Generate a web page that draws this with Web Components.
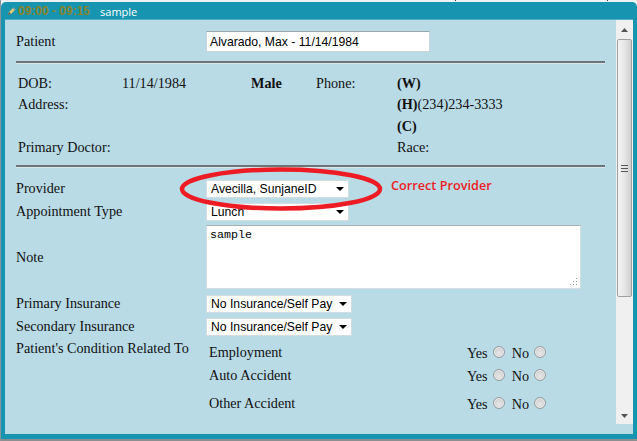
<!DOCTYPE html>
<html><head><meta charset="utf-8"><style>
html,body{margin:0;padding:0;background:#e9edf0;width:637px;height:441px;overflow:hidden}
body{background:linear-gradient(#444,#444) 455px 0/1px 1px no-repeat,linear-gradient(#444,#444) 607px 0/1px 1px no-repeat,linear-gradient(#8a949c,#8a949c) 0 0/1px 441px no-repeat,#eef1f3}
</style></head><body>
<x-window>
  <x-title slot="title" time="09:00 - 09:15" name="sample"></x-title>
  <x-patient-row label="Patient" value="Alvarado, Max - 11/14/1984"></x-patient-row>
  <x-rule gap="9"></x-rule>
  <x-info></x-info>
  <x-rule gap="7"></x-rule>
  <x-field label="Provider" h="23" top="10" lp="0" lb="0"><x-select w="143" value="Avecilla, SunjaneID"></x-select></x-field>
  <x-field label="Appointment Type" h="24" top="0" lp="0" lb="2"><x-select w="143" value="Lunch"></x-select></x-field>
  <x-field label="Note" h="66" top="0" lp="0" lb="0"><x-note value="sample"></x-note></x-field>
  <x-field label="Primary Insurance" h="23" top="2" lp="0" lb="0"><x-select w="146" value="No Insurance/Self Pay"></x-select></x-field>
  <x-field label="Secondary Insurance" h="23" top="0" lp="0" lb="0"><x-select w="146" value="No Insurance/Self Pay"></x-select></x-field>
  <x-conditions></x-conditions>
  <x-callout></x-callout>
</x-window>
<script>
function def(name, html){
  customElements.define(name, class extends HTMLElement{
    constructor(){super();this.attachShadow({mode:'open'});}
    connectedCallback(){
      const a=n=>this.getAttribute(n)||'';
      this.shadowRoot.innerHTML=typeof html==='function'?html(a):html;
    }
  });
}
def('x-window',`<style>
:host{display:flex;flex-direction:column;position:relative;box-sizing:border-box;width:636px;height:437px;margin:2px 0 0 1px;background:#1795b0;border-radius:5px 5px 0 0;padding:2px 4px 5px 4px;box-shadow:0 2px 0 #8b8f90;font:14.2px "Liberation Serif",serif;color:#111}
.body{flex:1;display:flex;min-height:0;background:#b9dbe6;box-shadow:0 -1px 0 #4fb0c8}
.content{flex:1;min-width:0;padding:11px 11px 0 11px;display:flex;flex-direction:column;position:relative}
</style><slot name="title"></slot><div class="body"><div class="content"><slot></slot></div><x-scrollbar></x-scrollbar></div>`);
def('x-title',a=>`<style>
:host{display:flex;align-items:center;height:14px;flex:none;margin-bottom:2px;overflow:hidden}
svg{margin:0 2px 0 2px;flex:none}
.t{font:bold 12px "Liberation Sans",sans-serif;color:#8b8328;margin-right:10px}
.n{font:11px "Open Sans","Liberation Sans",sans-serif;color:#fff}
</style><svg width="9" height="10" viewBox="0 0 9 10"><path d="M1 9L2 6L6.5 1.5L8.5 3.5L4 8Z" fill="#dccb78"/><path d="M6.5 1.5L8.5 3.5L7.5 4.5L5.5 2.5Z" fill="#8e9aa0"/><path d="M1 9L2 6L4 8Z" fill="#555"/></svg><span class="t">${a('time')}</span><span class="n">${a('name')}</span>`);
def('x-scrollbar',`<style>
:host{flex:none;width:17px;display:flex;flex-direction:column;background:#f0f0f0;margin-bottom:10px}
.b{height:19px;display:flex;align-items:center;justify-content:center;flex:none}
.e{height:17px}
.thumb{height:258px;flex:none;margin:0 1px 0 1px;border:1px solid #a0a0a0;border-radius:2px;background:linear-gradient(90deg,#f4f4f4,#e6e6e6 50%,#cfcfcf);display:flex;align-items:center;justify-content:center;box-sizing:border-box}
.g{width:7px;height:7px;background:repeating-linear-gradient(#555 0 1px,transparent 1px 3px)}
</style><div class="b"><svg width="7" height="4"><path d="M0 4L3.5 0L7 4Z" fill="#555"/></svg></div>
<div class="thumb"><div class="g"></div></div><div style="flex:1"></div>
<div class="b e"><svg width="7" height="4"><path d="M0 0L3.5 4L7 0Z" fill="#555"/></svg></div>`);
def('x-patient-row',a=>`<style>
:host{display:flex;align-items:center;height:21px;flex:none}
.l{width:190px}
.i{box-sizing:border-box;width:224px;height:21px;background:#fff;border:1px solid #c9d3d8;border-top-color:#9aa;display:flex;align-items:center;padding-left:3px;font:12.2px "Liberation Sans",sans-serif;color:#000}
</style><span class="l">${a('label')}</span><span class="i">${a('value')}</span>`);
def('x-rule',a=>`<style>:host{display:block;height:2px;background:#6f7476;flex:none;margin:${a('gap')}px 0 0;box-shadow:0 1px 0 #d8e8ee}</style>`);
def('x-info',`<style>
:host{display:grid;flex:none;grid-template-columns:104px 129px 65px 81px 1fr;grid-auto-rows:21.33px;padding:10px 0 0 2px;line-height:21px}
b{font-weight:bold}
</style><span>DOB:</span><span>11/14/1984</span><b>Male</b><span>Phone:</span><span><b>(W)</b></span>
<span>Address:</span><span></span><span></span><span></span><span><b>(H)</b>(234)234-3333</span>
<span></span><span></span><span></span><span></span><span><b>(C)</b></span>
<span style="grid-column:1/4">Primary Doctor:</span><span></span><span>Race:</span>`);
def('x-field',a=>`<style>
:host{display:flex;align-items:center;height:${a('h')}px;flex:none;margin-top:${a('top')}px}
.l{width:190px;flex:none;padding-top:${a('lp')}px;padding-bottom:${a('lb')}px}
</style><span class="l">${a('label')}</span><slot></slot>`);
def('x-select',a=>`<style>
:host{box-sizing:border-box;display:flex;align-items:center;justify-content:space-between;width:${a('w')}px;height:18px;background:#fff;border:1px solid #d3dde1;font:12.2px "Liberation Sans",sans-serif;color:#000;padding:0 4px 0 4px;white-space:nowrap}
svg{flex:none}
</style><span>${a('value')}</span><svg width="8" height="4"><path d="M0 0H8L4 4Z" fill="#000"/></svg>`);
def('x-note',a=>`<style>
:host{box-sizing:border-box;display:block;position:relative;width:375px;height:64px;background:#fff;border:1px solid #d3dde1;border-top-color:#a5b0b5;font:11.67px "Liberation Mono",monospace;color:#000;padding:2px 3px}
svg{position:absolute;right:3px;bottom:3px}
</style>${a('value')}<svg width="8" height="8"><path d="M7 1h1v1h-1zM4 4h1v1h-1zM7 4h1v1h-1zM1 7h1v1h-1zM4 7h1v1h-1zM7 7h1v1h-1z" fill="#999"/></svg>`);
def('x-radio',`<style>
:host{display:inline-block;box-sizing:border-box;width:12px;height:12px;border-radius:50%;border:1px solid #979c9e;background:radial-gradient(circle at 50% 60%,#e8e8e8,#c4c4c4);box-shadow:inset 0 0 0 1px #eee}
</style>`);
def('x-conditions',`<style>
:host{display:flex;flex:none;height:90px}
.l{width:190px;flex:none;padding-top:2px}
.g{display:grid;grid-template-columns:258px auto;grid-template-rows:24px 22px 34px;margin-left:3px;padding-top:2.5px}
.g>span{align-self:center}
.y{display:flex;align-items:center;padding-top:2px}
x-radio{margin:0 0 3px 5px}
.n{margin-left:7px}
</style><span class="l">Patient's Condition Related To</span><div class="g">
<span>Employment</span><div class="y"><span>Yes</span><x-radio></x-radio><span class="n">No</span><x-radio></x-radio></div>
<span>Auto Accident</span><div class="y"><span>Yes</span><x-radio></x-radio><span class="n">No</span><x-radio></x-radio></div>
<span>Other Accident</span><div class="y"><span>Yes</span><x-radio></x-radio><span class="n">No</span><x-radio></x-radio></div>
</div>`);
def('x-callout',`<style>
:host{position:absolute;left:170.5px;top:145.5px;width:340px;height:46px;pointer-events:none}
svg{position:absolute;left:0;top:0}
span{position:absolute;left:215.5px;top:10.5px;font:600 12.7px "Open Sans","Liberation Sans",sans-serif;color:#ed1c24;white-space:nowrap}
</style><svg width="210" height="46"><ellipse cx="105" cy="23" rx="99" ry="19.5" fill="none" stroke="#ed1c24" stroke-width="4.5"/></svg><span>Correct Provider</span>`);
</script>
</body></html>
